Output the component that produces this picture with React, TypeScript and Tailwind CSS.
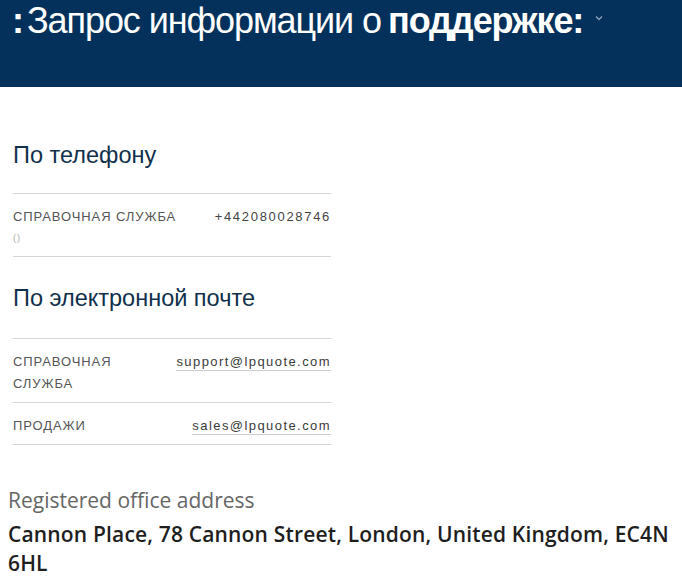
export default function App() {
  const sans = { fontFamily: '"Liberation Sans", Arial, sans-serif' };
  return (
    <div className="min-h-[585px] w-[682px] bg-white" style={sans}>
      <header className="h-[87px] bg-[#03315b] px-3 pt-[1px]">
        <h1 className="flex items-center text-[36px] leading-[40px] tracking-[-0.03em] text-white">
          <span className="font-bold">:</span>
          <span className="ml-[4px]">Запрос информации о</span>
          <span className="ml-[7px] font-bold tracking-[-0.03em]">поддержке:</span>
          <svg className="ml-[11px] mt-[-6px] h-[8px] w-[10px]" viewBox="0 0 10 8" fill="none">
            <path d="M2 2.5 5 5.5 8 2.5" stroke="#8aa0b8" strokeWidth="1.3" />
          </svg>
        </h1>
      </header>

      <main className="px-[13px] pt-[53px]">
        <section className="w-[318px]">
          <h2 className="text-[23.5px] leading-[30px] text-[#10304c]">По телефону</h2>
          <div className="mt-[23px] border-t border-[#d6d6d6]">
            <div className="flex justify-between pt-[14px] pb-[12px] text-[13px] tracking-[0.07em] text-[#555]">
              <div>
                <div className="leading-[18px]">СПРАВОЧНАЯ СЛУЖБА</div>
                <div className="mt-[6px] text-[9px] leading-[12px] text-[#aaa]">()</div>
              </div>
              <div className="leading-[18px] tracking-[0.13em] text-[#444]">+442080028746</div>
            </div>
          </div>
          <div className="border-t border-[#d6d6d6]" />

          <h2 className="mt-[26px] text-[23.5px] leading-[30px] text-[#10304c]">По электронной почте</h2>
          <div className="mt-[25px]">
            {[
              ["СПРАВОЧНАЯ СЛУЖБА", "support@lpquote.com"],
              ["ПРОДАЖИ", "sales@lpquote.com"],
            ].map(([label, email]) => (
              <div
                key={email}
                className="flex justify-between gap-4 border-t border-[#d6d6d6] pt-[12px] pb-[7px] text-[13px] leading-[22px] tracking-[0.07em] text-[#555] last:border-b"
              >
                <div className="w-[120px]">{label}</div>
                <div className="self-start">
                  <span className="whitespace-nowrap border-b border-[#cfcfcf] pb-[1px] tracking-[0.11em] text-[#3a3a3a]">
                    {email}
                  </span>
                </div>
              </div>
            ))}
          </div>
        </section>

        <section className="-mx-[5px] mt-[41px]" style={{ fontFamily: '"Open Sans", Lato, sans-serif' }}>
          <div className="text-[21px] leading-[28px] text-[#666]">Registered office address</div>
          <div className="mt-[6px] text-[21px] font-semibold leading-[29px] tracking-[0.008em] text-[#1e1e1e]">
            Cannon Place, 78 Cannon Street, London, United Kingdom, EC4N 6HL
          </div>
        </section>
      </main>
    </div>
  );
}
